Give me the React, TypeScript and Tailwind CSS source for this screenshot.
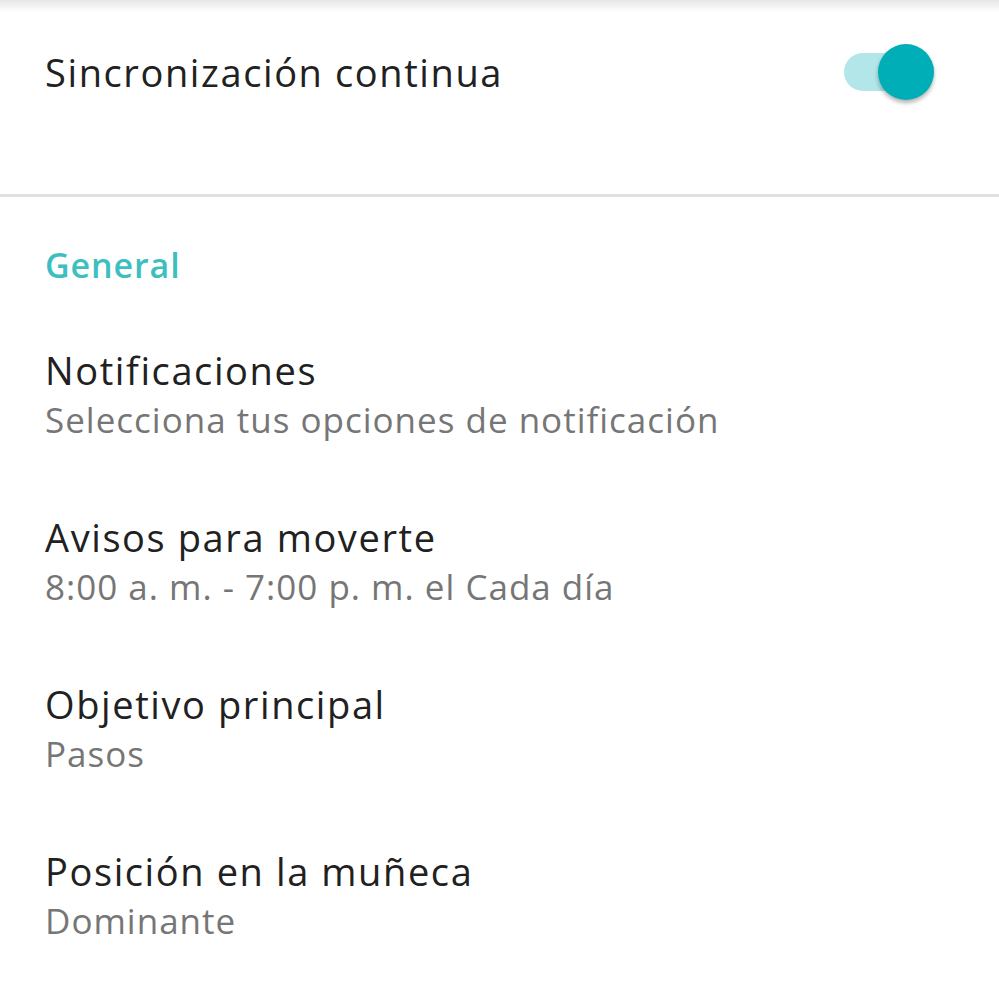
import React from 'react';

const items = [
  { title: 'Notificaciones', sub: 'Selecciona tus opciones de notificación' },
  { title: 'Avisos para moverte', sub: '8:00 a. m. - 7:00 p. m. el Cada día' },
  { title: 'Objetivo principal', sub: 'Pasos' },
  { title: 'Posición en la muñeca', sub: 'Dominante' },
];

const Toggle: React.FC = () => (
  <div className="relative w-[90px] h-[56px] flex items-center">
    <div className="w-[90px] h-[38px] rounded-full bg-[#b2e6e9]" />
    <div className="absolute right-0 top-0 w-[56px] h-[56px] rounded-full bg-[#00aeb8] shadow-[0_3px_4px_rgba(0,0,0,0.3)]" />
  </div>
);

export default function App() {
  return (
    <div className="relative min-h-screen bg-white text-[#212121]" style={{ fontFamily: '"Open Sans", "Noto Sans", sans-serif' }}>
      <div className="absolute inset-x-0 top-0 h-[12px] bg-gradient-to-b from-black/10 to-transparent" />
      <div className="flex items-center justify-between h-[144px] pl-[45px] pr-[65px] mb-[50px]">
        <span className="text-[38px] leading-[50px] tracking-[1.6px]">Sincronización continua</span>
        <Toggle />
      </div>
      <div className="h-[3px] bg-[#e0e0e0]" />
      <div className="pt-[43px] px-[45px]">
        <div className="text-[34px] leading-[50px] font-semibold tracking-[0.9px] text-[#3dbfbf]">General</div>
        <div className="flex flex-col gap-[67px] pt-[55px]">
          {items.map((it) => (
            <div key={it.title} className="flex flex-col">
              <span className="text-[38px] leading-[50px] tracking-[1.6px]">{it.title}</span>
              <span className="text-[35px] leading-[50px] tracking-[1px] text-[#767676]">{it.sub}</span>
            </div>
          ))}
        </div>
      </div>
    </div>
  );
}
